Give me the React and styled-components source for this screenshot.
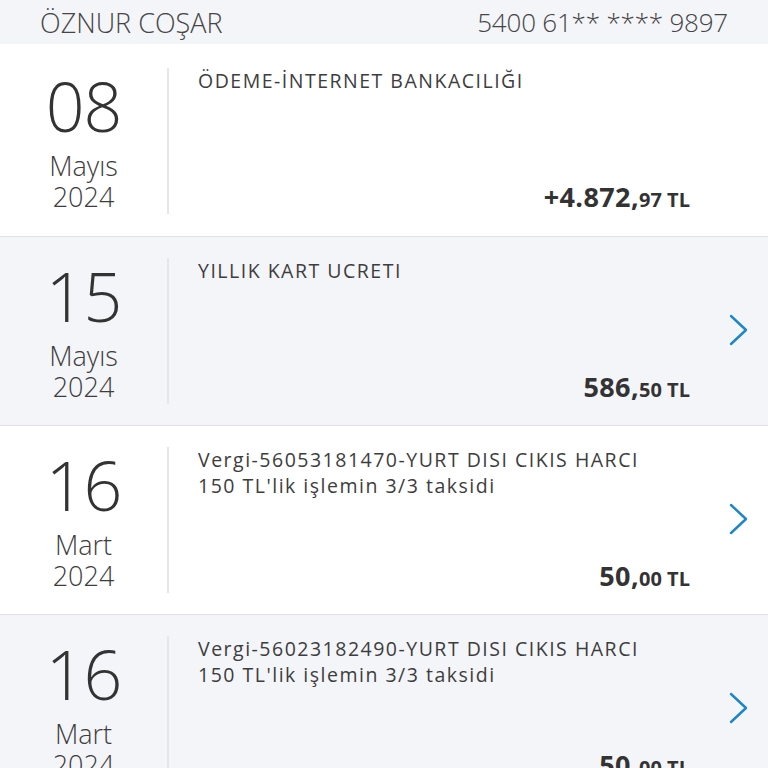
import React from 'react';
import styled, { createGlobalStyle } from 'styled-components';

const GlobalStyle = createGlobalStyle`
	html, body {
		margin: 0;
		padding: 0;
		background: #ffffff;
		overflow: hidden;
	}
	body {
		font-family: 'Open Sans', 'Noto Sans', sans-serif;
		color: #3b3b3b;
	}
`;

const Page = styled.div`
	width: 768px;
	height: 768px;
	overflow: hidden;
`;

const Header = styled.div`
	display: flex;
	align-items: center;
	justify-content: space-between;
	height: 44px;
	padding: 0 40px;
	background: #f4f5f8;
	font-weight: 300;
	color: #454545;
	box-sizing: border-box;
`;

const HolderName = styled.span`
	font-size: 27px;
`;

const CardNo = styled.span`
	font-size: 26px;
	letter-spacing: -0.2px;
`;

const Row = styled.div`
	display: grid;
	grid-template-columns: 169px 1fr 78px;
	padding: ${(p) => (p.$first ? '24px 0 22px' : '21px 0')};
	background: ${(p) => (p.$shaded ? '#f4f5f8' : '#ffffff')};
	border-bottom: 1px solid #e0e2e6;
`;

const DateCol = styled.div`
	display: flex;
	flex-direction: column;
	align-items: center;
	justify-content: center;
	height: 146px;
	border-right: 2px solid #e4e6e9;
	font-weight: 300;
	color: #333;
`;

const Day = styled.div`
	font-size: 68px;
	line-height: 72px;
	margin-bottom: 8px;
	letter-spacing: -1px;
`;

const DateLine = styled.div`
	font-size: 27px;
	line-height: 31px;
	color: #3d3d3d;
`;

const Content = styled.div`
	display: flex;
	flex-direction: column;
	justify-content: space-between;
	padding-left: 29px;
`;

const Description = styled.div`
	font-size: 19.5px;
	line-height: 26px;
	letter-spacing: 1.5px;
	color: #3d3d3d;
	white-space: pre-line;
`;

const Amount = styled.div`
	text-align: right;
	font-weight: 700;
	font-size: 27px;
	line-height: 28px;
	letter-spacing: 0.4px;
	color: #333;
`;

const Small = styled.span`
	font-size: 20px;
	letter-spacing: 0;
`;

const ArrowCol = styled.div`
	display: flex;
	align-items: center;
	padding-left: 38px;
`;

const Chevron = () => (
	<svg width="22" height="34" viewBox="0 0 22 34">
		<path d="M3 2 L18 16 L3 30" fill="none" stroke="#1c86c9" strokeWidth="2.4" strokeLinecap="round" strokeLinejoin="round" />
	</svg>
);

const transactions = [
	{ day: '08', month: 'Mayıs', year: '2024', text: 'ÖDEME-İNTERNET BANKACILIĞI', main: '+4.872,', cents: '97 TL', arrow: false },
	{ day: '15', month: 'Mayıs', year: '2024', text: 'YILLIK KART UCRETI', main: '586,', cents: '50 TL', arrow: true },
	{ day: '16', month: 'Mart', year: '2024', text: "Vergi-56053181470-YURT DISI CIKIS HARCI\n150 TL'lik işlemin 3/3 taksidi", main: '50,', cents: '00 TL', arrow: true },
	{ day: '16', month: 'Mart', year: '2024', text: "Vergi-56023182490-YURT DISI CIKIS HARCI\n150 TL'lik işlemin 3/3 taksidi", main: '50,', cents: '00 TL', arrow: true }
];

const App = () => (
	<Page>
		<GlobalStyle />
		<Header>
			<HolderName>ÖZNUR COŞAR</HolderName>
			<CardNo>5400 61** **** 9897</CardNo>
		</Header>
		{transactions.map((t, i) => (
			<Row key={i} $first={i === 0} $shaded={i % 2 === 1}>
				<DateCol>
					<Day>{t.day}</Day>
					<DateLine>{t.month}</DateLine>
					<DateLine>{t.year}</DateLine>
				</DateCol>
				<Content>
					<Description>{t.text}</Description>
					<Amount>
						{t.main}
						<Small>{t.cents}</Small>
					</Amount>
				</Content>
				<ArrowCol>{t.arrow && <Chevron />}</ArrowCol>
			</Row>
		))}
	</Page>
);

export default App;
